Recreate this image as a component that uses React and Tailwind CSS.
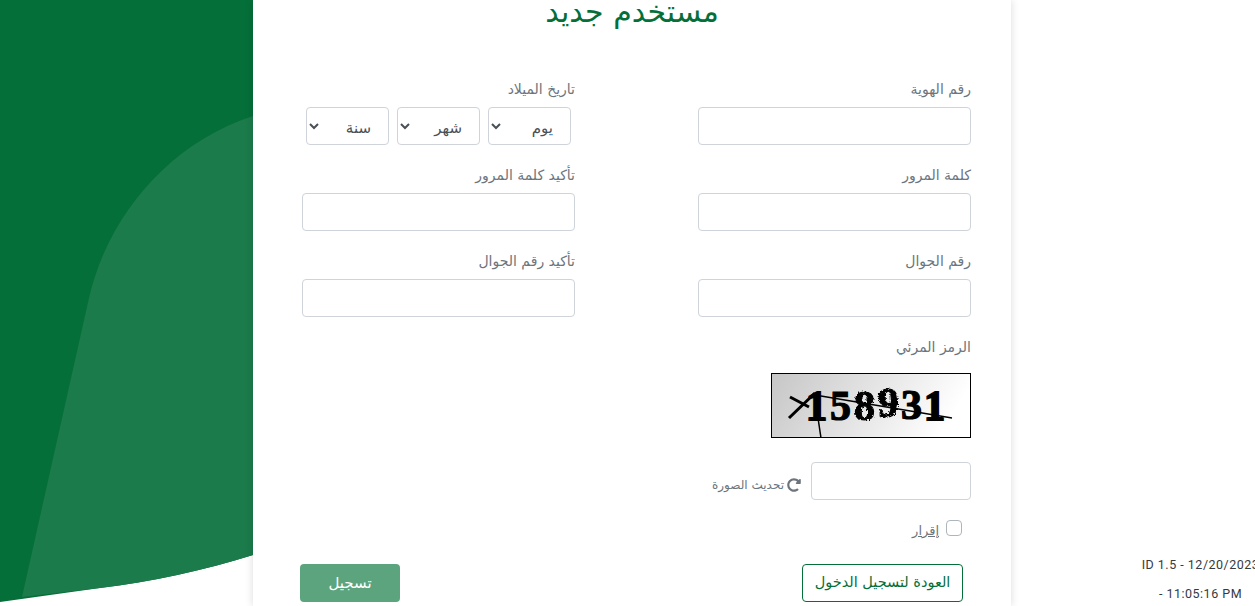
import { FaRedoAlt } from "react-icons/fa";

const font = { fontFamily: '"DejaVu Sans", "Noto Sans", sans-serif' };

function Field({ label, children }) {
  return (
    <div>
      <label className="block h-[26px] text-[14px] leading-[16px] text-[#6c757d]">{label}</label>
      {children}
    </div>
  );
}

function TextInput() {
  return <input className="block h-[38px] w-[273px] rounded-[4px] border border-[#ced4da] bg-white" />;
}

function DateSelect({ text }) {
  return (
    <select className="h-[38px] w-[83px] rounded-[4px] border border-[#ced4da] bg-white pt-[4px] pr-[13px] text-[15px] text-[#495057]">
      <option>{text}</option>
    </select>
  );
}

function Captcha() {
  return (
    <svg direction="ltr" width="200" height="65" viewBox="0 0 200 65" className="block">
      <defs>
        <linearGradient id="captchaBg" x1="0" y1="0" x2="1" y2="0.2">
          <stop offset="0" stopColor="#c6c6c6" />
          <stop offset="1" stopColor="#ffffff" />
        </linearGradient>
        <filter id="rough" x="-20%" y="-20%" width="140%" height="140%">
          <feTurbulence type="fractalNoise" baseFrequency="0.55" numOctaves="2" seed="4" />
          <feDisplacementMap in="SourceGraphic" scale="4" />
        </filter>
      </defs>
      <rect x="0.5" y="0.5" width="199" height="64" fill="url(#captchaBg)" stroke="#000" />
      <g fontFamily='"Liberation Serif", serif' fontWeight="700" fontSize="42" fill="#000" direction="ltr">
        <text x="35" y="47" stroke="#000" strokeWidth="2">1</text>
        <text x="59" y="47" stroke="#000" strokeWidth="1.2">5</text>
        <g filter="url(#rough)">
          <text x="83" y="47" stroke="#000" strokeWidth="1.2">8</text>
          <text x="107" y="44" stroke="#000" strokeWidth="1.2">9</text>
        </g>
        <text x="130" y="46" stroke="#000" strokeWidth="1.2">3</text>
        <text x="153" y="47" stroke="#000" strokeWidth="2">1</text>
      </g>
      <path d="M19 24 L38 34 M18 45 L44 20" stroke="#000" strokeWidth="3" fill="none" />
      <path d="M44 22 L181 45" stroke="#000" strokeWidth="1.5" fill="none" />
      <path d="M47 45 L50 65" stroke="#000" strokeWidth="1.5" fill="none" />
    </svg>
  );
}

export default function App() {
  return (
    <div className="flex h-[606px] w-[1255px] overflow-hidden bg-white" style={font}>
      <aside className="w-[253px] shrink-0">
        <svg width="253" height="606" viewBox="0 0 253 606" className="block">
          <path d="M0 0 H253 V555 C205 570 150 582 100 588 L0 602 Z" fill="#056f39" />
          <path d="M253 116 C170 143 108 215 89 298 L22 597 L100 588 C150 582 205 570 253 555 Z" fill="#1b7b4a" />
        </svg>
      </aside>

      <main dir="rtl" className="relative z-10 h-[606px] w-[758px] shrink-0 bg-white pr-[40px] shadow-[0_0_8px_rgba(0,0,0,0.15)]">
        <div className="h-[81px] pl-[40px]">
          <h1 className="-mt-[7px] text-center text-[30px] leading-[38px] font-normal text-[#056f39]">مستخدم جديد</h1>
        </div>

        <div className="grid w-[669px] grid-cols-[273px_273px] gap-x-[123px] gap-y-[22px] pt-[7px]">
          <Field label="رقم الهوية"><TextInput /></Field>
          <Field label="تاريخ الميلاد">
            <div className="flex gap-2 pr-1">
              <DateSelect text="يوم" />
              <DateSelect text="شهر" />
              <DateSelect text="سنة" />
            </div>
          </Field>
          <Field label="كلمة المرور"><TextInput /></Field>
          <Field label="تأكيد كلمة المرور"><TextInput /></Field>
          <Field label="رقم الجوال"><TextInput /></Field>
          <Field label="تأكيد رقم الجوال"><TextInput /></Field>
        </div>

        <div className="mt-[22px]">
          <label className="block h-[34px] text-[14px] leading-[16px] text-[#6c757d]">الرمز المرئي</label>
          <Captcha />
          <div className="mt-[24px] flex items-center">
            <input className="block h-[38px] w-[160px] rounded-[4px] border border-[#ced4da] bg-white" />
            <a className="mt-[7px] mr-[10px] flex items-center gap-[3px] text-[12px] text-[#6c757d]">
              <FaRedoAlt className="text-[14px]" />
              <span>تحديث الصورة</span>
            </a>
          </div>
          <div className="mt-[20px] mr-[9px] flex items-start gap-[7px]">
            <input type="checkbox" className="h-4 w-4 appearance-none rounded-[4px] border border-[#adb5bd] bg-white" />
            <span className="mt-px text-[13px] leading-[20px] text-[#6c757d] underline">إقرار</span>
          </div>
        </div>

        <div className="mt-[23px] flex w-[671px] justify-between pr-[8px]">
          <button className="h-[38px] w-[161px] rounded-[4px] border border-[#056f39] bg-white text-[14.5px] text-[#056f39]">العودة لتسجيل الدخول</button>
          <button className="h-[38px] w-[100px] rounded-[4px] bg-[#5ca47e] text-[15px] text-white">تسجيل</button>
        </div>
      </main>

      <footer className="-mb-[2px] flex min-w-0 flex-1 flex-col items-center justify-end pl-[135px] text-[12.5px] leading-[29px] tracking-[0.5px] whitespace-nowrap text-[#343a40]" style={{ fontFamily: "Roboto, sans-serif" }}>
        <p>ID 1.5 - 12/20/2023</p>
        <p>- 11:05:16 PM</p>
      </footer>
    </div>
  );
}
